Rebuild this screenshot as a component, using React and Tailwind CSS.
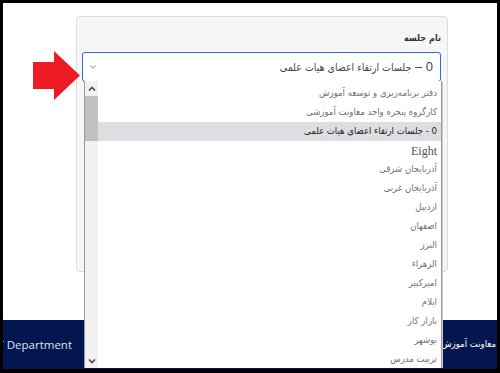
import { ChevronDown } from "lucide-react";

const options = [
  { label: "دفتر برنامه‌ریزی و توسعه آموزش" },
  { label: "کارگروه پنجره واحد معاونت آموزشی" },
  { label: "0 - جلسات ارتقاء اعضای هیات علمی", selected: true },
  { label: "Eight", latin: true },
  { label: "آذربایجان شرقی" },
  { label: "آذربایجان غربی" },
  { label: "اردبیل" },
  { label: "اصفهان" },
  { label: "البرز" },
  { label: "الزهراء" },
  { label: "امیرکبیر" },
  { label: "ایلام" },
  { label: "بازار کار" },
  { label: "بوشهر" },
  { label: "تربیت مدرس" },
];

const persian = "font-['DejaVu_Sans_Condensed','DejaVu_Sans',Tahoma,sans-serif]";

const Caret = ({ up }) => (
  <svg width="8" height="5" viewBox="0 0 8 5" className={up ? "" : "rotate-180"}>
    <path d="M1 4.5 L4 1.5 L7 4.5" fill="none" stroke="#4a4a4a" strokeWidth="1.6" />
  </svg>
);

const OptionList = () => (
  <div className="absolute left-[1px] top-full z-10 flex h-[287px] w-[358px] border-x border-[#9a9a9a] bg-white shadow-[1px_0_0_#c8ccd2]">
    <div className="flex w-[13px] flex-col bg-[#f1f1f1]">
      <div className="flex h-[15px] items-center justify-center">
        <Caret up />
      </div>
      <div className="h-[45px] bg-[#c1c1c1]" />
      <div className="flex-1" />
      <div className="flex h-[14px] items-center justify-center">
        <Caret />
      </div>
    </div>
    <div dir="rtl" className="flex-1 pt-[3px]">
      {options.map((opt) => (
        <div
          key={opt.label}
          className={`flex h-[19px] items-center pr-[4px] ${
            opt.selected ? "bg-[#dddde2] text-[#222]" : ""
          } ${
            opt.latin
              ? "font-['Liberation_Serif',serif] text-[12px] text-[#555]"
              : `${persian} text-[9.5px] ${opt.selected ? "" : "text-[#707070]"}`
          }`}
        >
          {opt.label}
        </div>
      ))}
    </div>
  </div>
);

export default function App() {
  return (
    <div className="h-[373px] w-[500px] bg-black pb-[4px] pl-[3px] pr-[3px] pt-[3px]">
      <div className="relative flex h-full w-full flex-col overflow-hidden bg-white">
        <div className="flex-1">
          <div className="ml-[73px] mt-[13px] h-[256px] w-[372px] rounded-[4px] border border-[#dcdcdc] bg-[#f6f6f6] pl-[5px] pr-[6px] pt-[14px]">
            <div dir="rtl" className={`${persian} h-[14px] text-[9px] font-bold leading-[14px] text-[#333]`}>
              نام جلسه
            </div>
            <div className="relative mt-[7px] flex h-[30px] w-[359px] items-center justify-between rounded-[3px] border-[1.5px] border-[#2a6ad9] bg-white pl-[5px] pr-[7px]">
              <ChevronDown size={10} strokeWidth={1.8} className="text-[#555]" />
              <div dir="rtl" className={`${persian} text-[10.5px] text-[#444]`}>
                <span className="font-['Liberation_Sans',sans-serif] text-[13px]">0 – </span>
                جلسات ارتقاء اعضای هیات علمی
              </div>
              <OptionList />
            </div>
          </div>
        </div>
        <footer className="flex h-[49px] items-center justify-between bg-[#031650]">
          <div className="flex w-[69px] justify-end whitespace-nowrap font-['Open_Sans',sans-serif] text-[11.5px] text-[#dfe2ec]">
            IT Department
          </div>
          <span dir="rtl" className={`${persian} whitespace-nowrap pr-[1px] text-[9.5px] text-white`}>
            معاونت آموزش و
          </span>
        </footer>
        <svg
          width="48"
          height="51"
          viewBox="0 0 48 51"
          className="absolute left-[30px] top-[47px]"
        >
          <polygon points="0,12 21,12 21,1 47,25.5 21,50 21,39 0,39" fill="#ed1c24" />
        </svg>
      </div>
    </div>
  );
}
